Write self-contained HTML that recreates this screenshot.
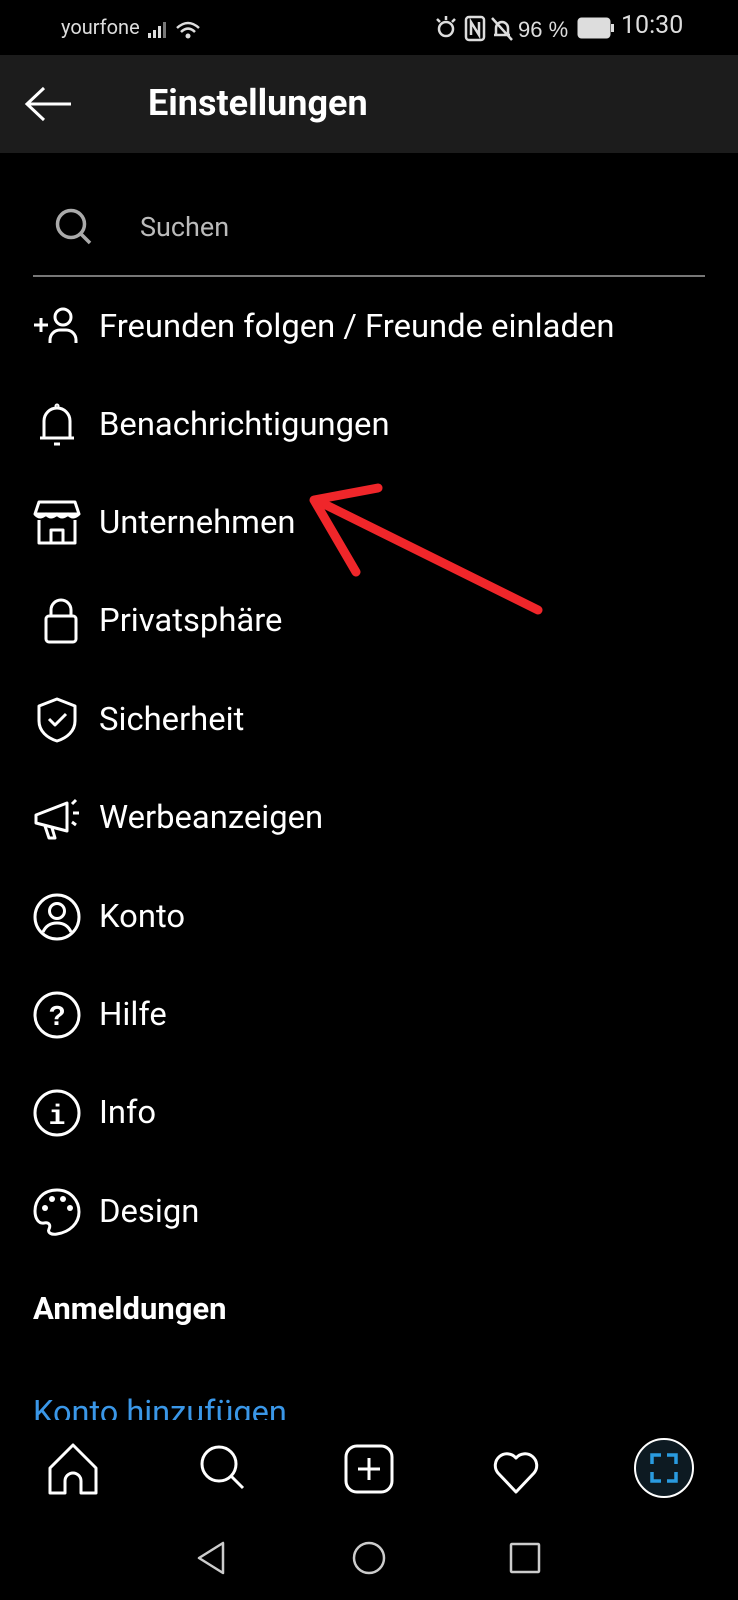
<!DOCTYPE html>
<html><head><meta charset="utf-8"><style>
html,body{margin:0;padding:0;background:#000;}
body{width:738px;height:1600px;position:relative;overflow:hidden;font-family:"Roboto","Liberation Sans",sans-serif;color:#fff;}
.a{position:absolute;}
.row{position:absolute;left:99px;font-size:32.8px;line-height:40px;white-space:nowrap;}
.ic{position:absolute;left:33px;width:48px;height:48px;}
svg{overflow:visible}
</style></head><body>
<!-- status bar -->
<div class="a" style="left:61px;top:15px;font-size:20px;color:#ddd;">yourfone</div>
<svg class="a" style="left:148px;top:20px" width="54" height="20"><g fill="#ddd"><rect x="0" y="13" width="3" height="5"/><rect x="5" y="10" width="3" height="8"/><rect x="10" y="6" width="3" height="12"/><rect x="15" y="2" width="3" height="16" fill="#777"/></g><g fill="none" stroke="#ddd" stroke-width="2.5"><path d="M29 8 Q40 -2 51 8"/><path d="M33 12 Q40 5 47 12"/></g><circle cx="40" cy="16" r="2.5" fill="#ddd"/></svg>
<svg class="a" style="left:434px;top:14px" width="150" height="28"><g fill="none" stroke="#ddd" stroke-width="2.5"><circle cx="12" cy="15" r="7"/><path d="M3 5l3 3M12 2v4M21 5l-3 3"/><rect x="32" y="3" width="18" height="23" rx="3"/><path d="M37 21V8l8 13V8"/><path d="M60 21h16M62 21v-7a6 6 0 0 1 12 0v7M58 4l20 22"/></g><text x="84" y="23" fill="#ddd" font-size="22" font-family="Liberation Sans">96 %</text></svg>
<svg class="a" style="left:577px;top:17px" width="40" height="24"><rect x="1.5" y="1.5" width="31" height="19" rx="3" fill="#ddd" stroke="#ddd" stroke-width="2"/><rect x="34" y="7" width="3" height="8" fill="#ddd"/></svg>
<div class="a" style="left:621px;top:11px;font-size:25px;color:#ddd;">10:30</div>
<!-- header -->
<div class="a" style="left:0;top:55px;width:738px;height:98px;background:#1c1c1c"></div>
<svg class="a" style="left:24px;top:86px" width="50" height="36"><path d="M47 18H3M20 2L3 18l17 16" fill="none" stroke="#fff" stroke-width="3"/></svg>
<div class="a" style="left:148px;top:82px;font-size:36px;font-weight:bold;">Einstellungen</div>
<!-- search -->
<svg class="a" style="left:54px;top:207px" width="40" height="40"><circle cx="17" cy="17" r="13.5" fill="none" stroke="#aaa" stroke-width="3.5"/><path d="M27 27l9 9" stroke="#aaa" stroke-width="3.5"/></svg>
<div class="a" style="left:140px;top:211px;font-size:27px;color:#bbb;">Suchen</div>
<div class="a" style="left:33px;top:275px;width:672px;height:2px;background:#777"></div>
<!-- rows -->
<svg class="ic" style="top:303px" viewBox="0 0 48 48"><g fill="none" stroke="#fff" stroke-width="3"><path d="M1 22h14M8 15v14"/><circle cx="30" cy="14" r="8"/><path d="M17 40v-3a10 10 0 0 1 10-10h6a10 10 0 0 1 10 10v3"/></g></svg>
<div class="row" style="top:307px">Freunden folgen / Freunde einladen</div>
<svg class="ic" style="top:401px" viewBox="0 0 48 48"><g fill="none" stroke="#fff" stroke-width="3"><path d="M11 37V20a13 13 0 0 1 26 0v17h4H7z"/><path d="M21 43h6"/><circle cx="24" cy="5" r="1" /></g></svg>
<div class="row" style="top:405px">Benachrichtigungen</div>
<svg class="ic" style="top:499px" viewBox="0 0 48 48"><g fill="none" stroke="#fff" stroke-width="3" stroke-linejoin="round"><path d="M6 3h36l4 12H2z"/><path d="M2 15q5 6 11 0q5 6 11 0q5 6 11 0q5 6 11 0"/><path d="M6 21v23h36V21"/><path d="M18 44V31h12v13"/></g></svg>
<div class="row" style="top:503px">Unternehmen</div>
<svg class="ic" style="top:597px" viewBox="0 0 48 48"><g fill="none" stroke="#fff" stroke-width="3"><rect x="13" y="19" width="30" height="26" rx="3"/><path d="M18 19v-6a10 10 0 0 1 20 0v6"/></g></svg>
<div class="row" style="top:601px">Privatsphäre</div>
<svg class="ic" style="top:696px" viewBox="0 0 48 48"><g fill="none" stroke="#fff" stroke-width="3" stroke-linejoin="round"><path d="M24 3l18 7v15c0 10-8 17-18 20C14 42 6 35 6 25V10z"/><path d="M16 23l6 6 11-11"/></g></svg>
<div class="row" style="top:700px">Sicherheit</div>
<svg class="ic" style="top:794px" viewBox="0 0 48 48"><g fill="none" stroke="#fff" stroke-width="3" stroke-linejoin="round"><path d="M3 21l31-12v28L3 29z"/><path d="M12 32l4 12h6l-3-10"/><path d="M39 10l4-4M40 19h6M39 28l4 3"/></g></svg>
<div class="row" style="top:798px">Werbeanzeigen</div>
<svg class="ic" style="top:893px" viewBox="0 0 48 48"><g fill="none" stroke="#fff" stroke-width="3"><circle cx="24" cy="24" r="22"/><circle cx="24" cy="18" r="7.5"/><path d="M10 39q4-9 14-9t14 9"/></g></svg>
<div class="row" style="top:897px">Konto</div>
<svg class="ic" style="top:991px" viewBox="0 0 48 48"><circle cx="24" cy="24" r="22" fill="none" stroke="#fff" stroke-width="3"/><text x="24" y="34" text-anchor="middle" fill="#fff" font-size="28" font-weight="bold" font-family="Liberation Sans">?</text></svg>
<div class="row" style="top:995px">Hilfe</div>
<svg class="ic" style="top:1089px" viewBox="0 0 48 48"><circle cx="24" cy="24" r="22" fill="none" stroke="#fff" stroke-width="3"/><text x="24" y="35" text-anchor="middle" fill="#fff" font-size="28" font-weight="bold" font-family="Liberation Mono">i</text></svg>
<div class="row" style="top:1093px">Info</div>
<svg class="ic" style="top:1188px" viewBox="0 0 48 48"><g fill="none" stroke="#fff" stroke-width="3" stroke-linejoin="round"><path d="M24 2C10 2 2 12 2 23c0 8 4 13 9 12 5-1 7 2 5 6-2 4 3 6 8 5 13-2 22-11 22-22S38 2 24 2z"/></g><g fill="#fff"><circle cx="12" cy="20" r="3"/><circle cx="19" cy="11" r="3"/><circle cx="30" cy="11" r="3"/><circle cx="37" cy="20" r="3"/></g></svg>
<div class="row" style="top:1192px">Design</div>
<div class="a" style="left:33px;top:1290px;font-size:31px;font-weight:bold;">Anmeldungen</div>
<div class="a" style="left:33px;top:1392px;height:28px;overflow:hidden;font-size:32.5px;line-height:40px;color:#3a97e8;">Konto hinzufügen</div>
<!-- arrow -->
<svg class="a" style="left:0;top:0" width="738" height="700"><g fill="none" stroke="#f0262a" stroke-width="9" stroke-linecap="round" stroke-linejoin="round"><path d="M538 610L316 500"/><path d="M378 488L314 500 356 572"/></g></svg>
<!-- bottom nav -->
<svg class="a" style="left:0;top:1440px" width="738" height="60"><g fill="none" stroke="#fff" stroke-width="3" stroke-linejoin="round"><path d="M50 45V20l23-23 23 23v25H81V33a8 8 0 0 0-16 0v12z" transform="translate(0,8)"/><circle cx="219" cy="24" r="17"/><path d="M231 36l12 12"/><rect x="346" y="6" width="46" height="46" rx="11"/><path d="M369 18v22M358 29h22"/><path d="M516 52L498 33a11 11 0 0 1 18-15 11 11 0 0 1 18 15z"/></g><circle cx="664" cy="28" r="29" fill="#0d1a22" stroke="#fff" stroke-width="2"/><g fill="none" stroke="#2a9be0" stroke-width="3.5"><path d="M652 24v-9h9M667 15h9v9M676 32v9h-9M661 41h-9v-9"/></g></svg>
<!-- system nav -->
<svg class="a" style="left:0;top:1535px" width="738" height="50"><g fill="none" stroke="#ccc" stroke-width="2.5" stroke-linejoin="round"><path d="M223 8v30L199 23z"/><circle cx="369" cy="23" r="15"/><rect x="511" y="9" width="28" height="28" rx="1"/></g></svg>
</body></html>
